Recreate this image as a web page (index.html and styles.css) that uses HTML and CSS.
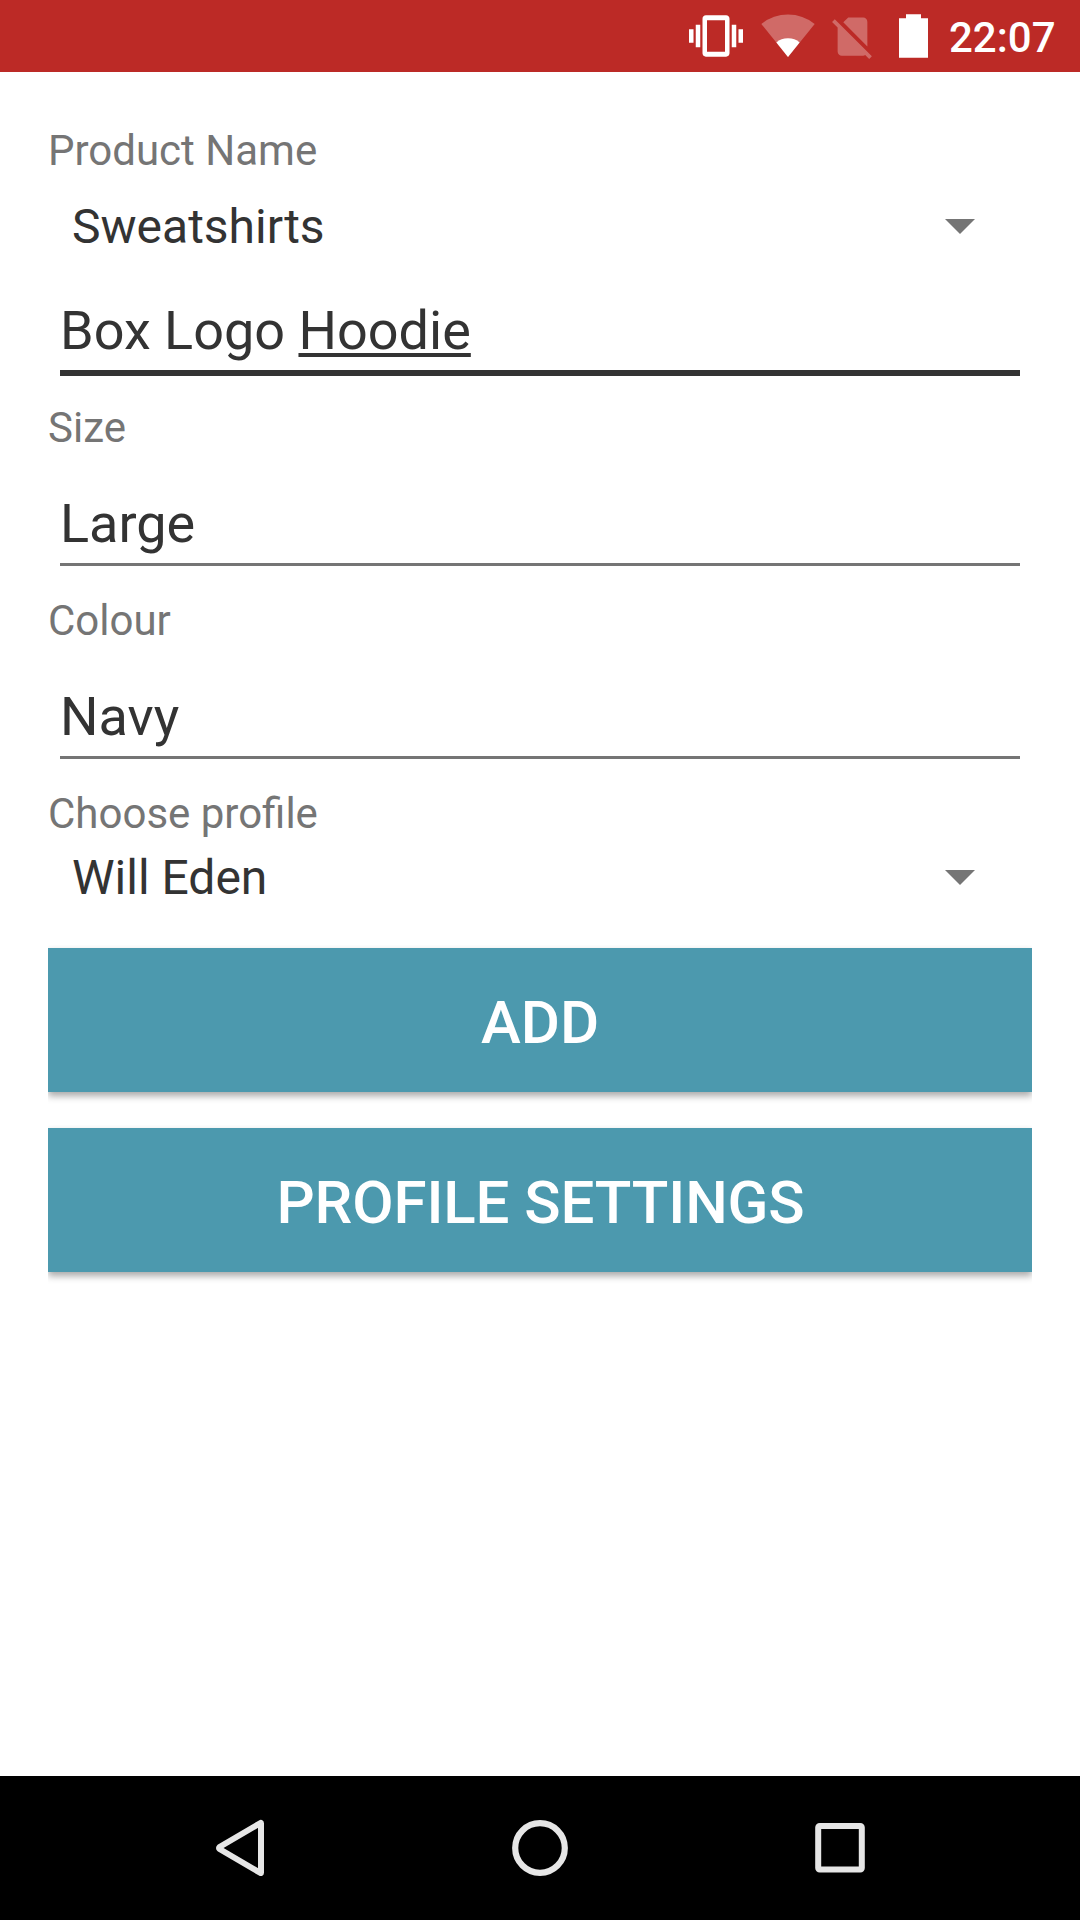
FILE: index.html
```html
<!DOCTYPE html>
<html lang="en">
<head>
<meta charset="utf-8">
<title>Product settings</title>
<link rel="stylesheet" href="styles.css">
</head>
<body>
<header class="status-bar">
  <svg class="status-vibrate" width="54" height="54" viewBox="0 0 24 24"><path fill="#fff" d="M0 15h2V9H0v6zm3 2h2V7H3v10zm19-8v6h2V9h-2zm-3 8h2V7h-2v10zM16.5 2.8h-9C6.67 2.8 6 3.47 6 4.3v15.4c0 .83.67 1.5 1.5 1.5h9c.83 0 1.5-.67 1.5-1.5V4.3c0-.83-.67-1.5-1.5-1.5zM16 19H8V5h8v14z"/></svg>
  <svg class="status-wifi" width="54" height="44" viewBox="0 0 54 44"><path fill="#fff" fill-opacity=".3" d="M27 43 .3 10Q12 .5 27 .5T53.700 10z"/><path fill="#fff" d="M27 43 15.400 28.500Q20 24.300 27 24.300T38.600 28.500z"/></svg>
  <svg class="status-sim" width="51" height="51" viewBox="0 0 24 24"><path fill="#fff" fill-opacity=".3" d="M18.990 5c0-1.100-.89-2-1.990-2h-7L7.660 5.340 19 16.680 18.990 5zM3.650 3.880 2.380 5.150 5 7.770V19c0 1.100.9 2 2 2h10.010c.35 0 .67-.1.96-.26l1.880 1.880 1.270-1.270L3.650 3.880z"/></svg>
  <svg class="status-battery" width="29" height="44" viewBox="0 0 29 44"><path fill="#fff" d="M7 .3h15v4h7v39.400H0V4.300h7z"/></svg>
  <time class="clock">22:07</time>
</header>
<main class="form">
  <div class="label">Product Name</div>
  <div class="spinner spinner-spaced"><span>Sweatshirts</span><svg width="30" height="16" viewBox="0 0 30 16"><path fill="#757575" d="M0 0h30L15 15z"/></svg></div>
  <div class="field field-focused">Box Logo <span class="composing">Hoodie</span></div>
  <div class="label label-field">Size</div>
  <div class="field">Large</div>
  <div class="label label-field">Colour</div>
  <div class="field">Navy</div>
  <div class="label label-profile">Choose profile</div>
  <div class="spinner"><span>Will Eden</span><svg width="30" height="16" viewBox="0 0 30 16"><path fill="#757575" d="M0 0h30L15 15z"/></svg></div>
  <div class="actions">
    <button class="button" type="button">ADD</button>
    <button class="button button-settings" type="button">PROFILE SETTINGS</button>
  </div>
</main>
<nav class="nav-bar">
  <svg width="60" height="60" viewBox="0 0 60 60"><path fill="none" stroke="#e6e6e6" stroke-width="6" stroke-linejoin="round" d="M51 5.200v49.600q0 .5-.5.2L9.500 31q-1-1 0-2L50.500 5q.5-.3.5.2z"/></svg>
  <svg width="60" height="60" viewBox="0 0 60 60"><circle cx="30" cy="30" r="24.800" fill="none" stroke="#e6e6e6" stroke-width="6.200"/></svg>
  <svg width="60" height="60" viewBox="0 0 60 60"><rect x="8.200" y="8" width="43.600" height="43.600" rx="1.500" fill="none" stroke="#e6e6e6" stroke-width="6"/></svg>
</nav>
</body>
</html>
```
FILE: styles.css
```css
* {
  box-sizing: border-box;
}

body {
  margin: 0;
  height: 1920px;
  display: flex;
  flex-direction: column;
  background: #fff;
  color: #333;
  font-family: Roboto, sans-serif;
}

svg {
  display: block;
  flex: none;
}

.status-bar {
  height: 72px;
  padding-right: 24px;
  display: flex;
  align-items: center;
  justify-content: flex-end;
  background: #bc2a26;
}

.status-wifi {
  margin-left: 18px;
}

.status-sim {
  margin-left: 12px;
}

.status-battery {
  margin-left: 21px;
}

.clock {
  width: 107px;
  height: 72px;
  margin-left: 21px;
  padding-top: 2px;
  color: #fff;
  font-size: 42px;
  font-weight: 500;
  line-height: 72px;
  white-space: nowrap;
}

.form {
  flex: 1;
  padding: 51px 48px 0;
}

.label {
  height: 56px;
  color: #757575;
  font-size: 42px;
  line-height: 56px;
}

.label-field {
  margin: 24px 0 36px;
}

.label-profile {
  margin-top: 24px;
}

.spinner {
  height: 72px;
  padding: 0 57px 1px 24px;
  display: flex;
  align-items: center;
  justify-content: space-between;
  font-size: 48px;
  line-height: 72px;
}

.spinner-spaced {
  margin: 12px 0 36px;
}

.field {
  height: 77px;
  margin: 0 12px;
  font-size: 54px;
  line-height: 64px;
  background: linear-gradient(#757575, #757575) 0 71px / 100% 3px no-repeat;
}

.field-focused {
  background: linear-gradient(#333, #333) 0 71px / 100% 6px no-repeat;
}

.composing {
  text-decoration: underline;
  text-decoration-thickness: 4px;
  text-decoration-skip-ink: none;
  text-underline-offset: 4px;
}

.actions {
  margin-top: 34px;
  display: grid;
  gap: 36px;
}

.button {
  height: 144px;
  padding: 5px 0 0;
  border: 0;
  background: #4c99ae;
  color: #fff;
  font-family: inherit;
  font-size: 60px;
  font-weight: 500;
  line-height: 139px;
  box-shadow: 0 4px 7px rgba(0, 0, 0, 0.34);
  clip-path: inset(-3px 0 -12px);
}

.button-settings {
  padding-left: 1px;
  letter-spacing: -0.1px;
}

.nav-bar {
  height: 144px;
  display: grid;
  grid-template-columns: repeat(3, 300px);
  place-content: center;
  place-items: center;
  background: #000;
}
```
